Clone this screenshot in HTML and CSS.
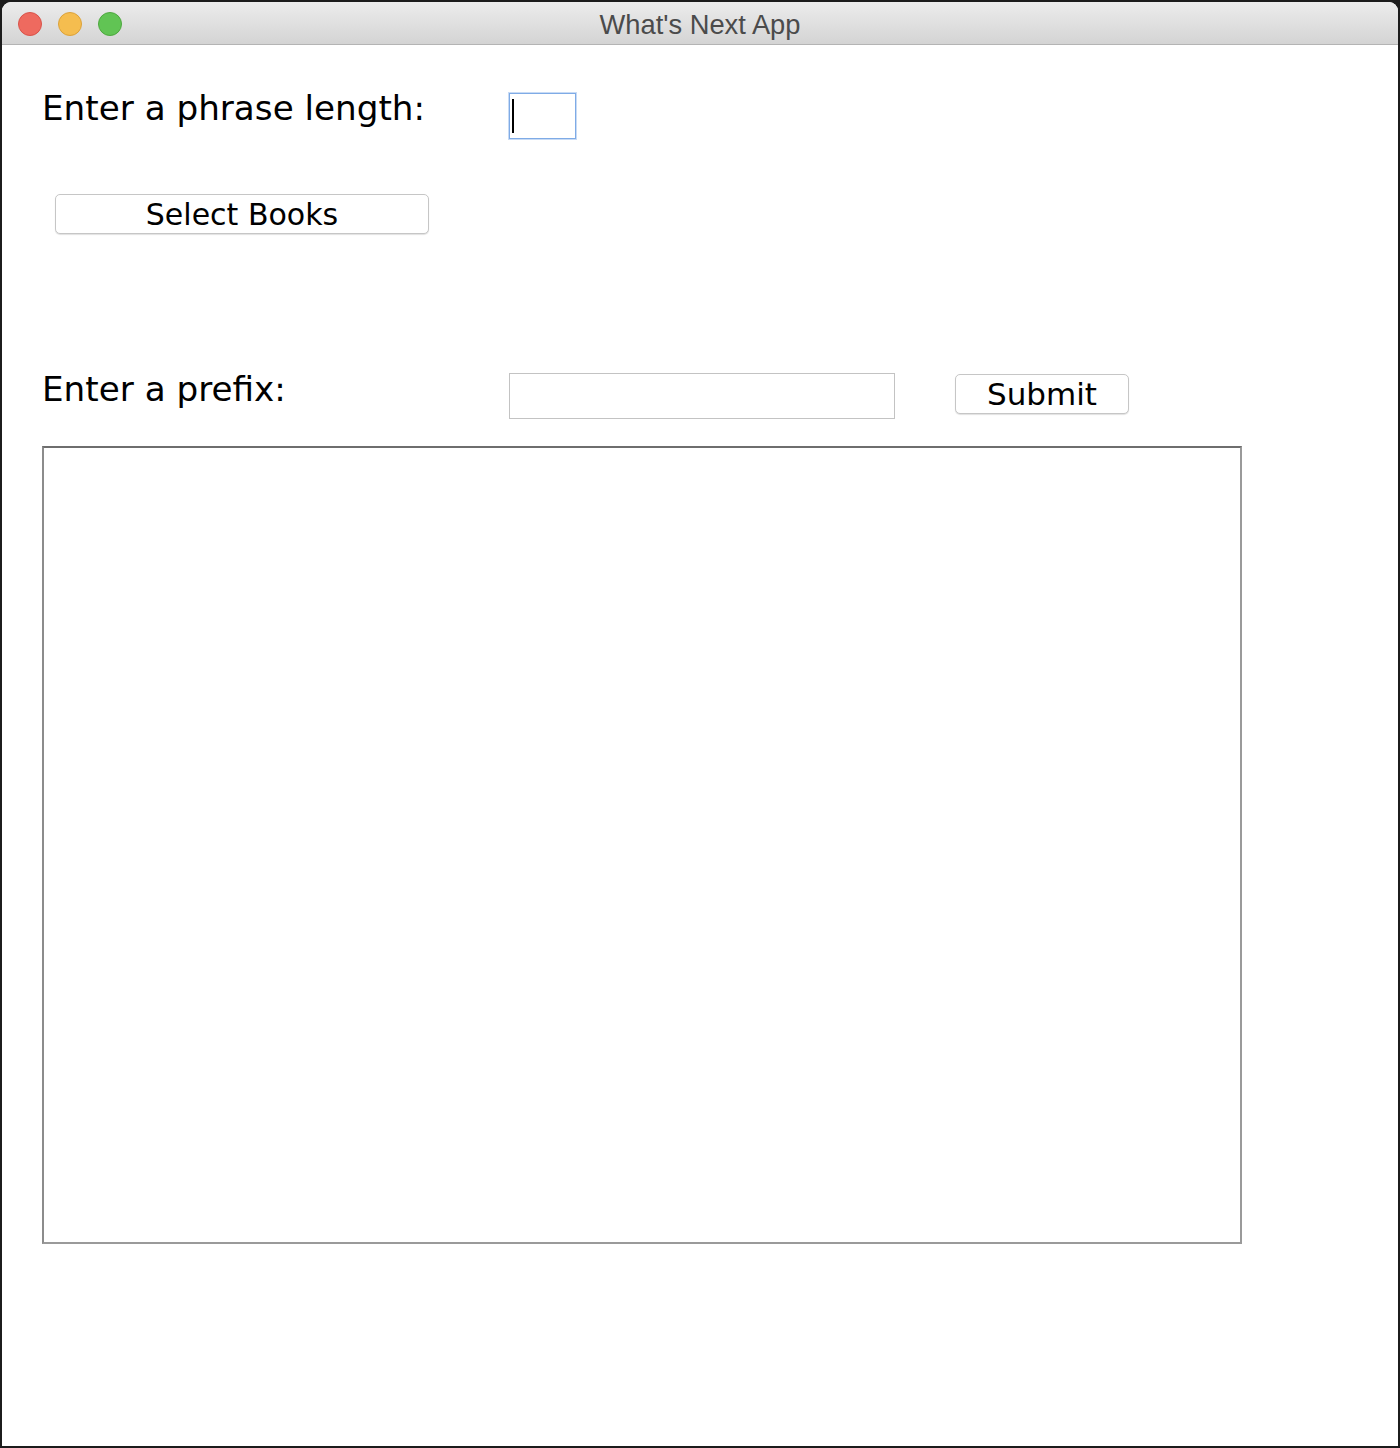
FILE: index.html
```html
<!DOCTYPE html>
<html>
<head>
<meta charset="utf-8">
<link rel="stylesheet" href="styles.css">
</head>
<body>
<div class="window">
  <div class="titlebar">
    <div class="lights">
      <span class="light red"></span>
      <span class="light yellow"></span>
      <span class="light green"></span>
    </div>
    <div class="title">What's Next App</div>
  </div>
  <div class="content">
    <div class="row row-phrase">
      <div class="label">Enter a phrase length:</div>
      <div class="input small focused"><span class="caret"></span></div>
    </div>
    <div class="row row-select">
      <div class="button select">Select Books</div>
    </div>
    <div class="row row-prefix">
      <div class="label">Enter a prefix:</div>
      <div class="input wide"></div>
      <div class="button submit">Submit</div>
    </div>
    <div class="textarea"></div>
  </div>
</div>
</body>
</html>
```
FILE: styles.css
```css
html, body {
  margin: 0;
  padding: 0;
  background: #1c1c1c;
}
body {
  width: 1400px;
  height: 1448px;
  overflow: hidden;
}
.window {
  margin: 2px 2px 0 2px;
  height: 1444px;
  background: #ffffff;
  border-radius: 9px 9px 0 0;
  overflow: hidden;
  display: flex;
  flex-direction: column;
  font-family: "DejaVu Sans", "Liberation Sans", sans-serif;
  color: #000;
}
.titlebar {
  height: 42px;
  flex: 0 0 auto;
  background: linear-gradient(#ececec, #d4d4d4);
  border-bottom: 1px solid #b4b4b4;
  display: flex;
  align-items: center;
  position: relative;
}
.lights {
  display: flex;
  gap: 16px;
  padding-left: 16px;
  padding-top: 2px;
}
.light {
  width: 24px;
  height: 24px;
  border-radius: 50%;
  box-sizing: border-box;
}
.red { background: #ee6a5f; border: 1px solid #d9534a; }
.yellow { background: #f5bd4f; border: 1px solid #dca23a; }
.green { background: #61c454; border: 1px solid #4ea83f; }
.title {
  position: absolute;
  left: 0;
  right: 0;
  top: 0;
  bottom: 0;
  padding-top: 4px;
  display: flex;
  align-items: center;
  justify-content: center;
  font-family: "Liberation Sans", "Helvetica", sans-serif;
  font-size: 27.3px;
  color: #4b4b4b;
}
.content {
  display: flex;
  flex-direction: column;
  padding-left: 40px;
}
.row {
  display: flex;
  align-items: flex-start;
}
.label {
  font-size: 34.2px;
  width: 467px;
  line-height: 38px;
}
.row-phrase {
  padding-top: 44px;
}
.input {
  box-sizing: border-box;
  border: 1px solid #c3c3c3;
  background: #fff;
  height: 46px;
}
.input.small {
  width: 67px;
  margin-top: 4px;
  border: 1px solid #7fabe6;
  box-shadow: 0 0 0 1px #c8dbf5;
  padding: 5px 0 0 2px;
}
.caret {
  display: block;
  width: 2px;
  height: 34px;
  background: #000;
}
.button {
  box-sizing: border-box;
  border: 1px solid #c6c6c6;
  border-radius: 5px;
  background: #fff;
  box-shadow: 0 1px 1px rgba(0,0,0,0.12);
  font-size: 31px;
  line-height: 39px;
  text-align: center;
}
.row-select {
  padding-top: 55px;
  padding-left: 13px;
}
.button.select {
  width: 374px;
  height: 40px;
  font-size: 30px;
}
.row-prefix {
  padding-top: 136px;
}
.input.wide {
  width: 386px;
  height: 46px;
  margin-top: 3px;
}
.button.submit {
  width: 174px;
  height: 40px;
  margin-top: 4px;
  margin-left: 60px;
}
.textarea {
  margin-top: 27px;
  width: 1200px;
  height: 798px;
  box-sizing: border-box;
  border-top: 2px solid #6e6e6e;
  border-left: 2px solid #8c8c8c;
  border-right: 2px solid #9a9a9a;
  border-bottom: 2px solid #9a9a9a;
}
```
